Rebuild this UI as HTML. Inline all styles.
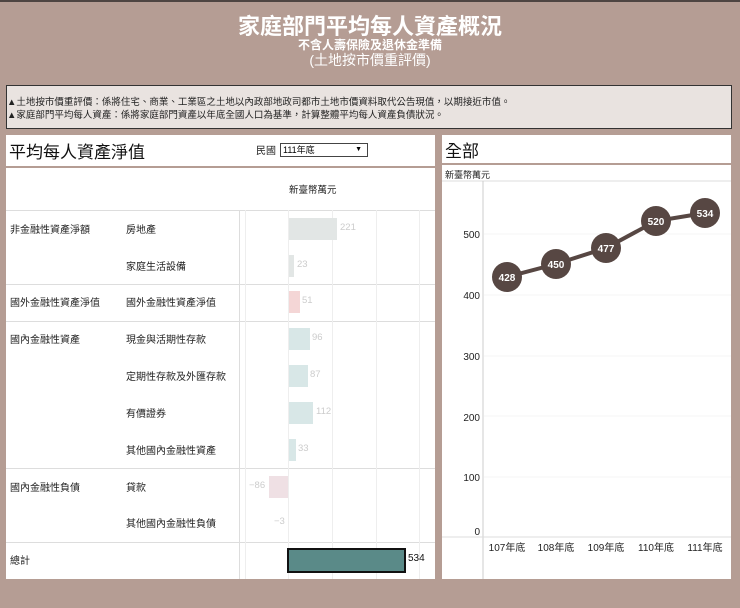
<!DOCTYPE html>
<html><head><meta charset="utf-8"><style>
*{margin:0;padding:0;box-sizing:border-box}
body{width:740px;height:608px;background:#b59d94;font-family:"Liberation Sans","Noto Sans CJK TC",sans-serif;position:relative;overflow:hidden}
.a{position:absolute;white-space:nowrap}
.w{background:#fff}
.t{color:#fff;font-weight:bold;text-align:center;left:0;width:740px}
.s{font-size:10px;color:#222}
.v{font-size:9.5px;color:#ccc}
.h{position:absolute;left:6px;width:429px;height:1px;background:#ddd}
.g{position:absolute;top:210px;width:1px;height:369px;background:#eee}
</style></head><body>
<div class="a" style="left:0;top:0;width:740px;height:2px;background:#4e4542"></div>
<div class="a t" style="top:9px;font-size:22px">家庭部門平均每人資產概況</div>
<div class="a t" style="top:36px;font-size:12px">不含人壽保險及退休金準備</div>
<div class="a t" style="top:50px;font-size:14px;font-weight:normal">(土地按市價重評價)</div>
<div class="a" style="left:6px;top:85px;width:726px;height:44px;background:#e9e3e0;border:1px solid #333"></div>
<div class="a" style="left:7px;top:94px;font-size:9.5px;color:#222">▲土地按市價重評價：係將住宅、商業、工業區之土地以內政部地政司都市土地市價資料取代公告現值，以期接近市值。</div>
<div class="a" style="left:7px;top:107px;font-size:9.5px;color:#222">▲家庭部門平均每人資產：係將家庭部門資產以年底全國人口為基準，計算整體平均每人資產負債狀況。</div>

<div class="a w" style="left:6px;top:135px;width:429px;height:31px"></div>
<div class="a" style="left:9px;top:138px;font-size:17px;color:#111">平均每人資產淨值</div>
<div class="a s" style="left:256px;top:142px">民國</div>
<div class="a" style="left:280px;top:143px;width:88px;height:14px;border:1px solid #444;font-size:9px;padding-left:2px;line-height:12px">111年底<span style="position:absolute;right:5px;font-size:7px">▼</span></div>
<div class="a w" style="left:6px;top:168px;width:429px;height:411px"></div>
<div class="a" style="left:289px;top:182px;font-size:9.5px;color:#222">新臺幣萬元</div>
<div class="h" style="top:210px"></div><div class="h" style="top:284px"></div><div class="h" style="top:321px"></div><div class="h" style="top:468px"></div><div class="h" style="top:542px"></div>
<div class="a" style="left:239px;top:210px;width:1px;height:369px;background:#ddd"></div>
<div class="g" style="left:245px"></div><div class="g" style="left:288px"></div><div class="g" style="left:332px"></div><div class="g" style="left:376px"></div><div class="g" style="left:419px"></div>

<div class="a s" style="left:10px;top:221px">非金融性資產淨額</div>
<div class="a s" style="left:10px;top:294px">國外金融性資產淨值</div>
<div class="a s" style="left:10px;top:331px">國內金融性資產</div>
<div class="a s" style="left:10px;top:479px">國內金融性負債</div>
<div class="a s" style="left:10px;top:552px">總計</div>
<div class="a s" style="left:126px;top:221px">房地產</div>
<div class="a s" style="left:126px;top:258px">家庭生活設備</div>
<div class="a s" style="left:126px;top:294px">國外金融性資產淨值</div>
<div class="a s" style="left:126px;top:331px">現金與活期性存款</div>
<div class="a s" style="left:126px;top:368px">定期性存款及外匯存款</div>
<div class="a s" style="left:126px;top:405px">有價證券</div>
<div class="a s" style="left:126px;top:442px">其他國內金融性資產</div>
<div class="a s" style="left:126px;top:479px">貸款</div>
<div class="a s" style="left:126px;top:515px">其他國內金融性負債</div>

<div class="a" style="left:289px;top:218px;width:48px;height:22px;background:#e2e6e5"></div><div class="a v" style="left:340px;top:222px">221</div>
<div class="a" style="left:289px;top:255px;width:5px;height:22px;background:#e2e6e5"></div><div class="a v" style="left:297px;top:259px">23</div>
<div class="a" style="left:289px;top:291px;width:11px;height:22px;background:#f4d6d6"></div><div class="a v" style="left:302px;top:295px">51</div>
<div class="a" style="left:289px;top:328px;width:21px;height:22px;background:#d8e7e7"></div><div class="a v" style="left:312px;top:332px">96</div>
<div class="a" style="left:289px;top:365px;width:19px;height:22px;background:#d8e7e7"></div><div class="a v" style="left:310px;top:369px">87</div>
<div class="a" style="left:289px;top:402px;width:24px;height:22px;background:#d8e7e7"></div><div class="a v" style="left:316px;top:406px">112</div>
<div class="a" style="left:289px;top:439px;width:7px;height:22px;background:#d8e7e7"></div><div class="a v" style="left:298px;top:443px">33</div>
<div class="a" style="left:269px;top:476px;width:19px;height:22px;background:#efe0e4"></div><div class="a v" style="left:249px;top:480px">−86</div>
<div class="a v" style="left:274px;top:516px">−3</div>
<div class="a" style="left:287px;top:548px;width:119px;height:25px;background:#5a8a88;border:2px solid #111"></div><div class="a" style="left:408px;top:553px;font-size:10px;color:#111">534</div>

<div class="a w" style="left:442px;top:135px;width:289px;height:28px"></div>
<div class="a" style="left:445px;top:137px;font-size:17px;color:#111">全部</div>
<div class="a w" style="left:442px;top:165px;width:289px;height:414px"></div>
<div class="a" style="left:445px;top:168px;font-size:9px;color:#222">新臺幣萬元</div>
<svg class="a" style="left:442px;top:165px" width="289" height="414">
<line x1="0" y1="16" x2="289" y2="16" stroke="#ddd"/>
<line x1="41" y1="16" x2="41" y2="414" stroke="#ccc"/>
<line x1="0" y1="372" x2="289" y2="372" stroke="#ddd"/>
<g stroke="#f4f4f4"><line x1="42" y1="69" x2="289" y2="69"/><line x1="42" y1="130" x2="289" y2="130"/><line x1="42" y1="191" x2="289" y2="191"/><line x1="42" y1="251" x2="289" y2="251"/><line x1="42" y1="312" x2="289" y2="312"/></g>
<g font-size="10" fill="#222" text-anchor="end" font-family="Liberation Sans"><text x="38" y="73">500</text><text x="38" y="134">400</text><text x="38" y="195">300</text><text x="38" y="256">200</text><text x="38" y="316">100</text><text x="38" y="370">0</text></g>
<g font-size="10" fill="#222" text-anchor="middle" font-family="Liberation Sans,Noto Sans CJK TC"><text x="65" y="386">107年底</text><text x="114" y="386">108年底</text><text x="164" y="386">109年底</text><text x="214" y="386">110年底</text><text x="263" y="386">111年底</text></g>
<polyline points="65,112 114,99 164,83 214,56 263,48" fill="none" stroke="#574743" stroke-width="4"/>
<g fill="#574743"><circle cx="65" cy="112" r="15"/><circle cx="114" cy="99" r="15"/><circle cx="164" cy="83" r="15"/><circle cx="214" cy="56" r="15"/><circle cx="263" cy="48" r="15"/></g>
<g font-size="10" fill="#fff" font-weight="bold" text-anchor="middle" font-family="Liberation Sans"><text x="65" y="116">428</text><text x="114" y="103">450</text><text x="164" y="87">477</text><text x="214" y="60">520</text><text x="263" y="52">534</text></g>
</svg>
</body></html>
